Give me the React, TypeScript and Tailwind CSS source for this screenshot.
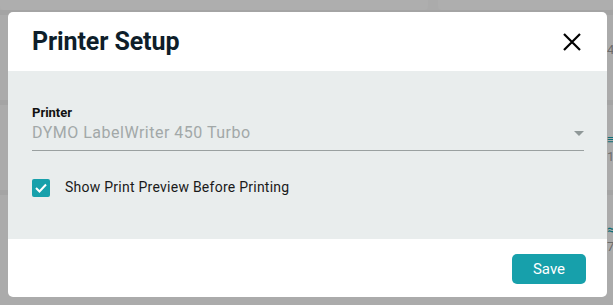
import React from "react";

const BackdropRow: React.FC<{ mark?: string; teal?: boolean; num?: string }> = ({ mark, teal, num }) => (
  <div className="h-[90px] border-t-[5px] border-[#a4a4a4] flex justify-end">
    <div className="w-[6px] flex flex-col gap-[4px] pt-[28px] text-[13px] leading-none text-[#6b6b6b]">
      {mark && <span className={teal ? "text-[#0f6f78] font-bold" : ""}>{mark}</span>}
      {num && <span>{num}</span>}
    </div>
  </div>
);

export default function App() {
  return (
    <div
      className="relative w-[613px] h-[305px] overflow-hidden bg-[#ababab]"
      style={{ fontFamily: "Roboto, 'Liberation Sans', sans-serif" }}
    >
      {/* dimmed page behind the dialog */}
      <div className="flex flex-col">
        <div className="h-[10px] flex gap-[10px]">
          <div className="w-[428px] rounded-b-[4px] bg-[#aeaeae]" />
          <div className="flex-1 rounded-b-[4px] bg-[#aeaeae]" />
        </div>
        <BackdropRow num="4" />
        <BackdropRow mark="≡" teal num="1" />
        <BackdropRow mark="≈" teal num="7" />
      </div>

      {/* dialog */}
      <div className="absolute left-[8px] top-[12px] w-[599px] h-[285px] bg-white rounded-[5px] overflow-hidden flex flex-col">
        <div className="h-[59px] shrink-0 flex items-center justify-between pl-[24px] pr-[24px]">
          <h2 className="text-[25px] font-bold text-[#0e1e2a] tracking-[-0.1px]">Printer Setup</h2>
          <button className="w-[22px] h-[22px] flex items-center justify-center text-black">
            <svg width="20" height="20" viewBox="0 0 20 20" fill="none" stroke="currentColor" strokeWidth="2.2">
              <path d="M2 2 L18 18 M18 2 L2 18" />
            </svg>
          </button>
        </div>

        <div className="h-[168px] shrink-0 bg-[#e9eded] pl-[24px] pr-[23px] pt-[34px]">
          <div className="text-[13px] leading-[16px] font-bold text-[#111]">Printer</div>
          <div className="mt-[2px] h-[28px] border-b border-[#9aa0a0] flex items-start justify-between">
            <span className="text-[16px] leading-[19px] text-[#a2a8a8] tracking-[0.5px]">DYMO LabelWriter 450 Turbo</span>
            <svg width="10" height="5" viewBox="0 0 10 5" className="mt-[8px]">
              <path d="M0 0 L10 0 L5 5 Z" fill="#8f9898" />
            </svg>
          </div>
          <label className="mt-[26px] flex items-center gap-[15px]">
            <span className="w-[18px] h-[18px] rounded-[2px] bg-[#17a0ab] flex items-center justify-center">
              <svg width="12" height="10" viewBox="0 0 12 10" fill="none" stroke="white" strokeWidth="2">
                <path d="M1 5 L4.5 8.5 L11 1.5" />
              </svg>
            </span>
            <span className="text-[14px] text-[#1a1a1a] tracking-[0.25px]">Show Print Preview Before Printing</span>
          </label>
        </div>

        <div className="flex-1 flex items-center justify-end pr-[21px] pt-[2px]">
          <button className="w-[74px] h-[30px] rounded-[5px] bg-[#17a0ab] text-white text-[15px]">Save</button>
        </div>
      </div>
    </div>
  );
}
